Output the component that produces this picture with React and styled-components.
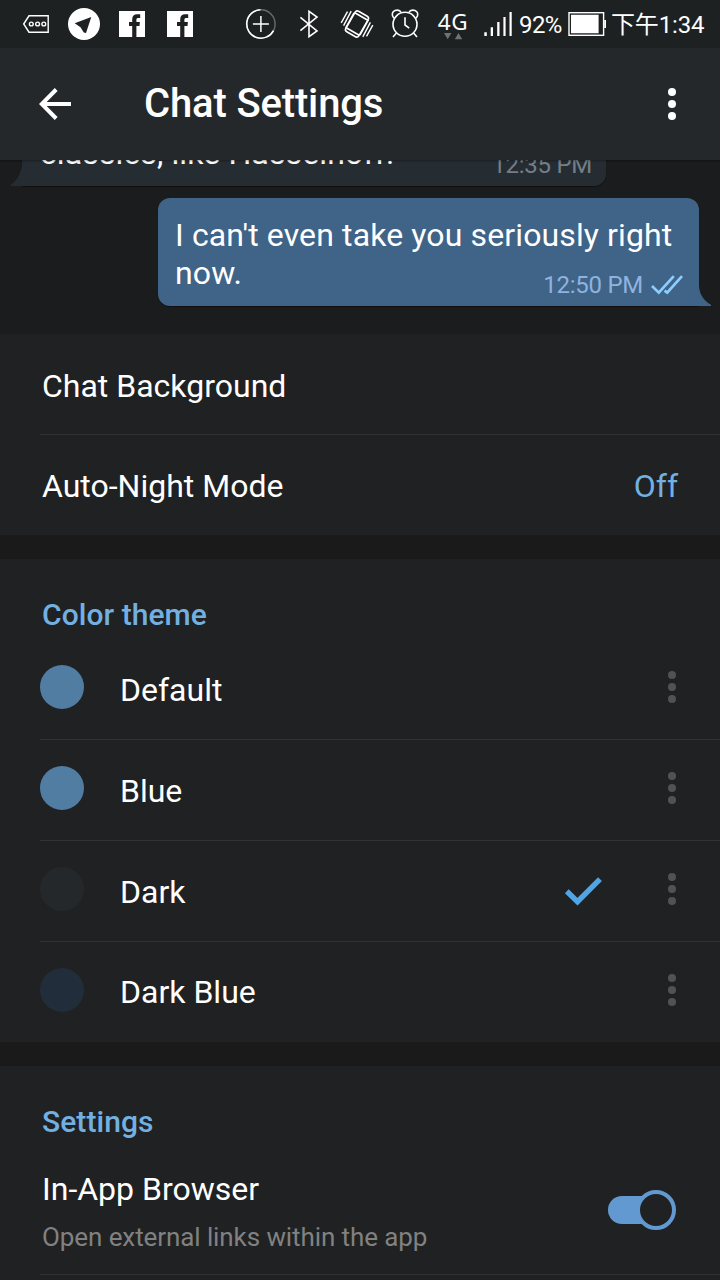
import React from "react";
import styled, { createGlobalStyle } from "styled-components";

const GlobalStyle = createGlobalStyle`
  * { box-sizing: border-box; }
  html, body { margin: 0; background: #202122; }
  body { font-family: Roboto, "Noto Sans CJK SC", sans-serif; color: #fff; }
  svg { display: block; flex: none; }
`;

const Screen = styled.div`
  width: 720px;
  height: 1280px;
  display: flex;
  flex-direction: column;
  overflow: hidden;
  background: #202122;
`;

const StatusBar = styled.header`
  flex: none;
  height: 48px;
  padding: 0 14px 0 12px;
  display: flex;
  align-items: center;
  background: #1e2121;
`;

const StatusGroup = styled.div`
  display: flex;
  align-items: center;
  margin-left: ${(p) => p.$offset || 0}px;
`;

const StatusText = styled.span`
  font-size: 24px;
  line-height: 28px;
  padding-top: 2px;
  white-space: nowrap;
  width: ${(p) => p.$width}px;
  margin-left: ${(p) => p.$offset}px;
  letter-spacing: ${(p) => p.$spacing || 0}px;
`;

const Network = styled.div`
  width: 48px;
  height: 48px;
  display: flex;
  flex-direction: column;
  align-items: center;
  padding-top: 10px;
`;

const NetworkLabel = styled.span`
  font-family: "Noto Sans", sans-serif;
  font-size: 22.5px;
  line-height: 23px;
  letter-spacing: 0.6px;
`;

const Toolbar = styled.div`
  flex: none;
  height: 112px;
  padding: 0 44px 0 39px;
  display: flex;
  align-items: center;
  background: #25282a;
  position: relative;
  z-index: 1;
  box-shadow: 0 1px 2px rgba(0, 0, 0, 0.35);
`;

const Title = styled.h1`
  flex: 1;
  margin: 0 0 0 73px;
  font-size: 40px;
  line-height: 48px;
  font-weight: 500;
  letter-spacing: -0.15px;
`;

const Preview = styled.section`
  flex: none;
  height: 174px;
  padding: 0 21px 28px 22px;
  display: flex;
  flex-direction: column;
  justify-content: flex-end;
  gap: 12px;
  overflow: hidden;
  background: #1b1c1d;
`;

const Bubble = styled.div`
  flex: none;
  position: relative;
  align-self: ${(p) => (p.$out ? "flex-end" : "flex-start")};
  width: ${(p) => (p.$out ? 541 : 584)}px;
  height: ${(p) => (p.$out ? 108 : 70)}px;
  padding: ${(p) => (p.$out ? "18px 16px 0 17px" : "18px 14px 0 18px")};
  border-radius: ${(p) => (p.$out ? "12px 12px 0 12px" : "12px 12px 12px 0")};
  background: ${(p) => (p.$out ? "#3f6487" : "#262d32")};
  box-shadow: 0 1px 1px rgba(0, 0, 0, 0.4);
`;

const MessageLine = styled.div`
  display: flex;
  justify-content: space-between;
  height: 38px;
`;

const MessageText = styled.span`
  font-size: 32px;
  line-height: 38px;
  letter-spacing: 0.12px;
  white-space: nowrap;
`;

const Meta = styled.span`
  display: flex;
  align-items: center;
  gap: 8px;
  margin-top: 17px;
  height: 28px;
  font-size: 24px;
  line-height: 28px;
  letter-spacing: -0.25px;
  white-space: nowrap;
  color: ${(p) => (p.$out ? "#8fb2df" : "#737f88")};
`;

const Tail = styled.svg`
  position: absolute;
  bottom: 0;
  ${(p) => (p.$out ? "right: -12px;" : "left: -11px;")}
`;

const Section = styled.section`
  flex: none;
  background: #202122;
`;

const SectionGap = styled.div`
  flex: none;
  height: 24px;
  background: #191a19;
`;

const SectionTitle = styled.h2`
  margin: 0;
  height: 80px;
  padding: 38px 0 0 42px;
  font-size: 30px;
  line-height: 36px;
  font-weight: 500;
  letter-spacing: 0.06px;
  color: #73b0e2;
`;

const Row = styled.div`
  margin-left: 40px;
  height: ${(p) => p.$height}px;
  padding: 0 44px 4px 0;
  display: flex;
  align-items: center;
  border-bottom: ${(p) => (p.$last ? "0" : "1px solid #303234")};
`;

const SettingRow = styled(Row)`
  padding: ${(p) => (p.$last ? 2 : 4)}px 42px 0 2px;
  justify-content: space-between;
`;

const ItemLabel = styled.span`
  font-size: 32px;
  line-height: 38px;
`;

const ThemeLabel = styled(ItemLabel)`
  flex: 1;
  margin-left: 36px;
  padding-top: ${(p) => p.$drop}px;
`;

const Value = styled(ItemLabel)`
  color: #73b0e2;
`;

const Swatch = styled.span`
  width: 44px;
  height: 44px;
  border-radius: 50%;
  background: ${(p) => p.$color};
`;

const CheckSlot = styled.span`
  margin-right: 65px;
  padding-top: 4px;
`;

const SwitchRow = styled(Row)`
  padding: 0 44px 0 2px;
  justify-content: space-between;
`;

const Description = styled.div`
  display: flex;
  flex-direction: column;
  gap: 13px;
  padding-top: 3px;
`;

const Subtitle = styled.span`
  font-size: 26px;
  line-height: 32px;
  letter-spacing: -0.09px;
  color: #818181;
`;

const Switch = styled.div`
  display: flex;
  align-items: center;
`;

const SwitchPill = styled.div`
  width: 54px;
  height: 28px;
  margin-right: -26px;
  border-radius: 14px;
  background: #6399d1;
`;

const SwitchThumb = styled.div`
  position: relative;
  width: 40px;
  height: 40px;
  border: 4px solid #6399d1;
  border-radius: 50%;
  background: #202122;
`;

const StatusIcon = ({ children, ...rest }) => (
  <svg width="48" height="48" viewBox="0 0 48 48" fill="none" stroke="#fff" strokeWidth="1.6" {...rest}>
    {children}
  </svg>
);

const TagIcon = () => (
  <StatusIcon strokeWidth="1.4">
    <path d="M11.7 24 17 15.8H36.2V32.2H17Z" />
    <circle cx="19.3" cy="24" r="1.9" />
    <circle cx="25.6" cy="24" r="1.9" />
    <circle cx="31.8" cy="24" r="1.9" />
  </StatusIcon>
);

const TelegramIcon = () => (
  <StatusIcon stroke="none">
    <circle cx="24" cy="24" r="16" fill="#fff" />
    <path d="M14.7 23.3 31.3 17 26 33 23.8 32.5 20.5 27.2Z" fill="#1e2121" />
  </StatusIcon>
);

const FacebookIcon = () => (
  <StatusIcon stroke="none">
    <path d="M11 11H37V37H11Z" fill="#fff" />
    <path d="M24.2 37V26H21V22H24.2V19.4C24.2 16 26.2 14.3 29 14.3H32.2V18H30.2C28.9 18 28.4 18.5 28.4 19.8V22H31.9L31.5 26H28.4V37Z" fill="#1e2121" />
  </StatusIcon>
);

const PlusIcon = () => (
  <StatusIcon>
    <circle cx="23.9" cy="24" r="14.2" stroke="#696c6c" strokeWidth="1.4" />
    <path d="M23.4 9.8A14.2 14.2 0 1 0 36.5 30.6" strokeWidth="1.6" />
    <path d="M15.9 24H31.9M23.9 16V32" strokeWidth="1.5" />
  </StatusIcon>
);

const BluetoothIcon = () => (
  <StatusIcon>
    <path d="M15.4 17.3 32 31 24 36.6V11.4L32 17 15.4 30.7" />
  </StatusIcon>
);

const VibrateIcon = () => (
  <StatusIcon>
    <g transform="rotate(30 24 24)">
      <rect x="16.5" y="12.2" width="15" height="23.6" rx="2.5" />
      <path d="M16.5 15.4H31.5M16.5 32.6H31.5" />
    </g>
    <path d="M8.2 22.8 14.5 11.6M10.6 25.6 18.2 11.2M12.6 28.2 21 12.8M39.8 25.2 33.5 36.4M37.4 22.4 29.8 36.8M35.4 19.8 27 35.2" strokeWidth="1.4" />
  </StatusIcon>
);

const AlarmIcon = () => (
  <StatusIcon>
    <circle cx="24" cy="24.3" r="12" />
    <path d="M24 17.3V25L28.2 28.2M12.9 18.2C10.2 15.4 11 11.5 14 10.5 16.8 9.6 19.2 10.5 20.2 12.5M35.1 18.2C37.8 15.4 37 11.5 34 10.5 31.2 9.6 28.8 10.5 27.8 12.5M15.4 33 12 37M32.6 33 36 37" />
  </StatusIcon>
);

const DataArrows = () => (
  <svg width="24" height="8" viewBox="0 0 24 8" fill="#6f7272">
    <path d="M3 0H10.4L6.7 6.3ZM13.8 6.3H21.2L17.5 0Z" />
  </svg>
);

const SignalIcon = () => (
  <svg width="28" height="24" viewBox="0 0 28 24" fill="#fff">
    <path d="M.3 20.3H2.8V24H.3ZM6.7 15.3H9V24H6.7ZM13.2 10H15.5V24H13.2ZM19.4 5H21.6V24H19.4ZM25.5 0H27.7V24H25.5Z" />
  </svg>
);

const BatteryIcon = () => (
  <svg width="38" height="24" viewBox="0 0 38 24" fill="none">
    <rect x="1" y=".7" width="34.6" height="22.6" stroke="#fff" strokeWidth="1.4" />
    <path d="M3 2.7H30.6V21.3H3ZM36.2 8H38V16H36.2Z" fill="#fff" />
  </svg>
);

const BackIcon = () => (
  <svg width="32" height="32" viewBox="0 0 32 32" fill="none" stroke="#fff" strokeWidth="4">
    <path d="M32 16H4M17.2 1.5 2.8 16 17.2 30.5" />
  </svg>
);

const MoreIcon = ({ color }) => (
  <svg width="8" height="32" viewBox="0 0 8 32" fill={color}>
    <circle cx="4" cy="4" r="4" />
    <circle cx="4" cy="16" r="4" />
    <circle cx="4" cy="28" r="4" />
  </svg>
);

const DoubleCheckIcon = () => (
  <svg width="32" height="20" viewBox="0 0 32 20" fill="none" stroke="#8dcdff" strokeWidth="2.7">
    <path d="M1 11 7.8 17.6 22.8 1.2M13.6 15.6 16.2 17.6 31 1.2" />
  </svg>
);

const CheckIcon = () => (
  <svg width="39" height="29" viewBox="0 0 39 29" fill="none" stroke="#50a5e6" strokeWidth="5.4">
    <path d="M2.8 14.2 13.5 24.6 36 2.2" />
  </svg>
);

const themes = [
  { name: "Default", color: "#527da3" },
  { name: "Blue", color: "#527da3" },
  { name: "Dark", color: "#25282a", selected: true },
  { name: "Dark Blue", color: "#212d3b" },
];

export default function App() {
  return (
    <Screen>
      <GlobalStyle />
      <StatusBar>
        <StatusGroup>
          <TagIcon />
          <TelegramIcon />
          <FacebookIcon />
          <FacebookIcon />
        </StatusGroup>
        <StatusGroup $offset={33}>
          <PlusIcon />
          <BluetoothIcon />
          <VibrateIcon />
          <AlarmIcon />
          <Network>
            <NetworkLabel>4G</NetworkLabel>
            <DataArrows />
          </Network>
        </StatusGroup>
        <StatusGroup $offset={7}>
          <SignalIcon />
          <StatusText $offset={7} $width={43} $spacing={-0.6}>92%</StatusText>
          <StatusGroup $offset={6}>
            <BatteryIcon />
          </StatusGroup>
          <StatusText $offset={5} $width={95} $spacing={-0.15}>下午1:34</StatusText>
        </StatusGroup>
      </StatusBar>
      <Toolbar>
        <BackIcon />
        <Title>Chat Settings</Title>
        <MoreIcon color="#fff" />
      </Toolbar>
      <Preview>
        <Bubble>
          <Tail width="23" height="30" viewBox="0 0 23 30" fill="#262d32">
            <path d="M23 0H11V6C11 16 7 24 0 28.5V30H23Z" />
          </Tail>
          <MessageLine>
            <MessageText>classics, like Hasselhoff!</MessageText>
            <Meta>12:35 PM</Meta>
          </MessageLine>
        </Bubble>
        <Bubble $out>
          <Tail $out width="24" height="30" viewBox="0 0 24 30" fill="#3f6487">
            <path d="M0 0H12V9C12 18 17 25 24 28.8V30H0Z" />
          </Tail>
          <MessageLine>
            <MessageText>I can't even take you seriously right</MessageText>
          </MessageLine>
          <MessageLine>
            <MessageText>now.</MessageText>
            <Meta $out>
              12:50 PM
              <DoubleCheckIcon />
            </Meta>
          </MessageLine>
        </Bubble>
      </Preview>
      <Section>
        <SettingRow $height={101}>
          <ItemLabel>Chat Background</ItemLabel>
        </SettingRow>
        <SettingRow $height={100} $last>
          <ItemLabel>Auto-Night Mode</ItemLabel>
          <Value>Off</Value>
        </SettingRow>
      </Section>
      <SectionGap />
      <Section>
        <SectionTitle>Color theme</SectionTitle>
        {themes.map((t, i) => {
          const last = i === themes.length - 1;
          return (
            <Row key={t.name} $height={last ? 100 : 101} $last={last}>
              <Swatch $color={t.color} />
              <ThemeLabel $drop={last ? 4 : 5}>{t.name}</ThemeLabel>
              {t.selected && (
                <CheckSlot>
                  <CheckIcon />
                </CheckSlot>
              )}
              <MoreIcon color="#505355" />
            </Row>
          );
        })}
      </Section>
      <SectionGap />
      <Section>
        <SectionTitle>Settings</SectionTitle>
        <SwitchRow $height={129}>
          <Description>
            <ItemLabel>In-App Browser</ItemLabel>
            <Subtitle>Open external links within the app</Subtitle>
          </Description>
          <Switch>
            <SwitchPill />
            <SwitchThumb />
          </Switch>
        </SwitchRow>
      </Section>
    </Screen>
  );
}
